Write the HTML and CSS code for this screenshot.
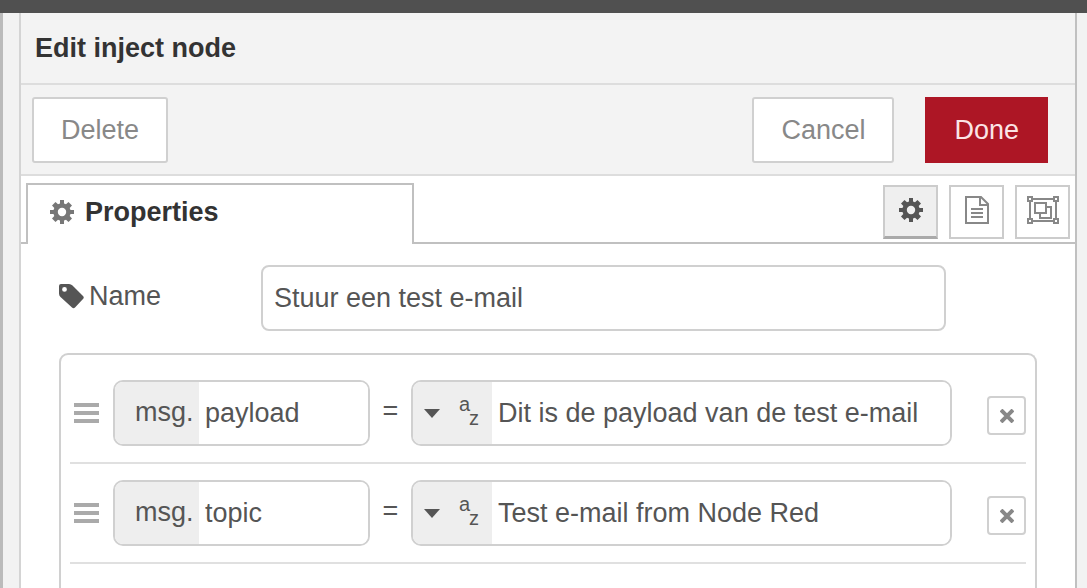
FILE: index.html
```
<!doctype html>
<html lang="en">
    <head>
        <meta charset="utf-8">
        <meta name="viewport" content="width=device-width, initial-scale=1.0">
        <title>Edit inject node</title>
        <link rel="stylesheet" href="styles.css">
    </head>
    <body>
    <svg class="symbols" aria-hidden="true">
        <symbol id="cog" viewBox="0 0 24 24">
            <path fill="currentColor" fill-rule="evenodd" d="M10 0h4v3.500l2 .8L18.500 2 22 5.500 19.700 8l.8 2H24v4h-3.500l-.8 2 2.300 2.500-3.500 3.500-2.500-2.300-2 .8V24h-4v-3.500l-2-.8L5.500 22 2 18.500 4.300 16l-.8-2H0v-4h3.500l.8-2L2 5.500 5.500 2 8 4.300l2-.8zM12 7.800a4.200 4.200 0 1 0 0 8.400 4.200 4.200 0 0 0 0-8.400z"/>
        </symbol>
    </svg>

    <div class="topbar"></div>
    <div class="workspace">
        <div class="tray">
            <h1 class="tray-header">Edit inject node</h1>
            <div class="tray-toolbar">
                <button type="button" class="btn">Delete</button>
                <span class="spacer"></span>
                <button type="button" class="btn">Cancel</button>
                <button type="button" class="btn primary">Done</button>
            </div>

            <div class="tabs">
                <button type="button" class="tab"><svg class="tab-icon"><use href="#cog"/></svg>Properties</button>
                <div class="tab-buttons">
                    <button type="button" class="icon-btn selected" aria-label="Properties"><svg width="24" height="24"><use href="#cog"/></svg></button>
                    <button type="button" class="icon-btn" aria-label="Description">
                        <svg width="24" height="28" viewBox="0 0 24 28" fill="none" stroke="currentColor" stroke-width="2">
                            <path d="M1 1h15l7 7v19H1zM15 1v8h8M6 13h12M6 17h12M6 21h12"/>
                        </svg>
                    </button>
                    <button type="button" class="icon-btn" aria-label="Appearance">
                        <svg width="32" height="28" viewBox="0 0 32 28" fill="none" stroke="currentColor" stroke-width="2">
                            <path d="M5 3h22M5 25h22M3 5v18M29 5v18"/>
                            <path d="M1 1h4v4H1zM27 1h4v4h-4zM1 23h4v4H1zM27 23h4v4h-4z"/>
                            <path d="M8 7h11v10H8zM20 11h4v11H13v-4"/>
                        </svg>
                    </button>
                </div>
            </div>

            <form class="form">
                <div class="form-row">
                    <label for="name">
                        <svg width="25" height="25" viewBox="0 0 25 25"><path fill="currentColor" fill-rule="evenodd" d="M2 0h8q2 0 3.500 1.500L24 12q1.500 1.500 0 3l-8 8.500q-1.500 1.500-3 0L1.500 13Q0 11.500 0 9.500V2Q0 0 2 0zM5.500 3a2.400 2.400 0 1 0 0 4.800 2.400 2.400 0 0 0 0-4.800z"/></svg>
                        Name
                    </label>
                    <input type="text" id="name" class="name-input" value="Stuur een test e-mail">
                </div>

                <ol class="props">
                    <li class="prop">
                        <span class="handle"></span>
                        <div class="typed key">
                            <label class="prefix" for="key1">msg.</label>
                            <input type="text" id="key1" value="payload">
                        </div>
                        <span class="equals">=</span>
                        <div class="typed value">
                            <button type="button" class="type" aria-label="String"><span class="caret"></span><span class="az"><span>a</span><span class="z">z</span></span></button>
                            <input type="text" aria-label="payload value" value="Dit is de payload van de test e-mail">
                        </div>
                        <button type="button" class="remove" aria-label="Remove">
                            <svg width="14" height="14" viewBox="0 0 14 14" stroke="currentColor" stroke-width="4"><path d="M1 1l12 12M13 1L1 13"/></svg>
                        </button>
                    </li>
                    <li class="prop">
                        <span class="handle"></span>
                        <div class="typed key">
                            <label class="prefix" for="key2">msg.</label>
                            <input type="text" id="key2" value="topic">
                        </div>
                        <span class="equals">=</span>
                        <div class="typed value">
                            <button type="button" class="type" aria-label="String"><span class="caret"></span><span class="az"><span>a</span><span class="z">z</span></span></button>
                            <input type="text" aria-label="topic value" value="Test e-mail from Node Red">
                        </div>
                        <button type="button" class="remove" aria-label="Remove">
                            <svg width="14" height="14" viewBox="0 0 14 14" stroke="currentColor" stroke-width="4"><path d="M1 1l12 12M13 1L1 13"/></svg>
                        </button>
                    </li>
                </ol>
            </form>
        </div>
    </div>
</body>
</html>
```

FILE: styles.css
```
* {
    box-sizing: border-box;
}
body {
    margin: 0;
    min-height: 100vh;
    display: flex;
    flex-direction: column;
    background: #f2f2f2;
    color: #555;
    font: 27px/32px "Liberation Sans", Arial, sans-serif;
}
button, input {
    font: inherit;
    color: inherit;
    margin: 0;
}
svg {
    display: block;
    flex: none;
}
.symbols {
    width: 0;
    height: 0;
    position: absolute;
}
.topbar {
    flex: none;
    height: 13px;
    background: #505050;
}
.workspace {
    flex: 1;
    display: flex;
    padding: 0 10px 0 16px;
    border-left: 3px solid #bbb;
}
.tray {
    flex: 1;
    min-width: 0;
    display: flex;
    flex-direction: column;
    background: #fff;
    border-left: 2px solid #d4d4d4;
    border-right: 2px solid #c0c0c0;
}

/* header */
.tray-header {
    margin: 0;
    padding: 19px 14px;
    background: #f3f3f3;
    border-bottom: 2px solid #ddd;
    color: #333;
    font-size: 27px;
    line-height: 32px;
}
.tray-toolbar {
    display: flex;
    align-items: center;
    padding: 12px 27px 11px 11px;
    background: #f3f3f3;
    border-bottom: 2px solid #ddd;
}
.spacer {
    flex: 1;
}
.btn {
    height: 66px;
    padding: 0 27px;
    background: #fff;
    border: 2px solid #d0d0d0;
    border-radius: 3px;
    color: #888;
}
.btn.primary {
    margin-left: 31px;
    background: #ad1625;
    border-color: #ad1625;
    border-radius: 0;
    color: #fbe4e6;
}

/* tabs */
.tabs {
    display: flex;
    justify-content: space-between;
    height: 68px;
    padding: 7px 5px 0;
    background: linear-gradient(#c0c0c0, #c0c0c0) bottom / 100% 2px no-repeat;
}
.tab {
    width: 388px;
    display: flex;
    align-items: center;
    gap: 11px;
    padding: 0 22px 5px;
    background: #fff;
    border: 2px solid #c0c0c0;
    border-bottom: 0;
    color: #333;
    font-weight: bold;
}
.tab-icon {
    width: 24px;
    height: 24px;
    color: #777;
}
.tab-buttons {
    display: flex;
    gap: 11px;
    padding-top: 2px;
}
.icon-btn {
    width: 55px;
    height: 54px;
    display: flex;
    align-items: center;
    justify-content: center;
    padding: 0 0 4px;
    background: #fff;
    border: 2px solid #ccc;
    color: #888;
}
.icon-btn.selected {
    background: #efefef;
    border-bottom: 3px solid #aaa;
    color: #555;
}

/* form */
.form {
    flex: 1;
    display: flex;
    flex-direction: column;
    padding: 21px 38px 0;
}
.form-row {
    display: flex;
    align-items: center;
}
.form-row label {
    width: 202px;
    display: flex;
    align-items: center;
    gap: 5px;
    padding-bottom: 4px;
}
.name-input {
    width: 70%;
    height: 66px;
    padding: 0 11px;
    background: #fff;
    border: 2px solid #d0d0d0;
    border-radius: 8px;
}
.props {
    flex: 1;
    list-style: none;
    margin: 22px 0 0;
    padding: 9px;
    border: 2px solid #d0d0d0;
    border-bottom: 0;
    border-radius: 9px 9px 0 0;
}
.prop {
    display: flex;
    align-items: center;
    height: 100px;
    border-bottom: 2px solid #e0e0e0;
}
.handle {
    width: 25px;
    height: 20px;
    margin: 0 14px 0 4px;
    background: repeating-linear-gradient(#aaa 0, #aaa 4px, transparent 4px, transparent 8px);
}
.typed {
    display: flex;
    height: 66px;
    min-width: 0;
    border: 2px solid #d0d0d0;
    border-radius: 10px;
    overflow: hidden;
}
.key {
    flex: 0 0 257px;
}
.value {
    flex: 1;
}
.typed input {
    flex: 1;
    width: 0;
    min-width: 0;
    padding: 0 6px;
    border: 0;
    background: #fff;
}
.prefix, .type {
    flex: none;
    display: flex;
    align-items: center;
    background: #eee;
    border: 0;
}
.prefix {
    width: 84px;
    padding: 0 0 3px 20px;
}
.type {
    width: 79px;
    padding: 0 0 0 11px;
}
.caret {
    border: 8px solid transparent;
    border-top: 9px solid #555;
    border-bottom: 0;
}
.az {
    display: flex;
    flex-direction: column;
    align-items: flex-start;
    margin-left: 19px;
    padding-bottom: 4px;
    font-size: 20px;
    line-height: 14px;
}
.z {
    padding-left: 10px;
}
.equals {
    width: 41px;
    padding-bottom: 4px;
    text-align: center;
}
.remove {
    width: 39px;
    height: 39px;
    display: flex;
    align-items: center;
    justify-content: center;
    margin: 4px 0 0 35px;
    padding: 2px 0 0;
    background: #fff;
    border: 2px solid #d0d0d0;
    border-radius: 4px;
    color: #888;
}
```
